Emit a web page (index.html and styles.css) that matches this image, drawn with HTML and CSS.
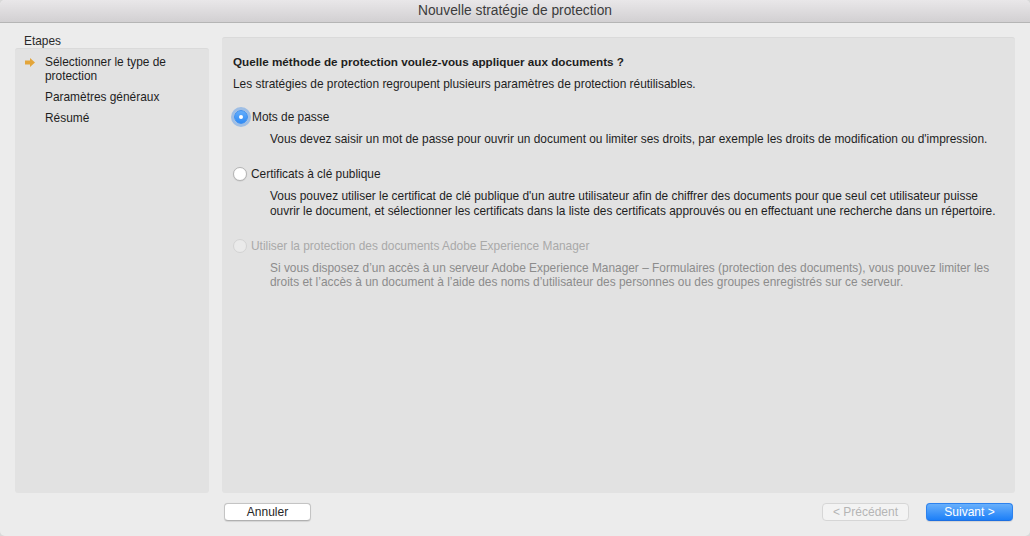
FILE: index.html
```html
<!DOCTYPE html>
<html lang="fr">
<head>
<meta charset="utf-8">
<title>Nouvelle stratégie de protection</title>
<link rel="stylesheet" href="styles.css">
</head>
<body>
<div class="window">
  <div class="titlebar">Nouvelle stratégie de protection</div>
  <div class="main">
    <div class="steps-col">
      <div class="steps-label">Etapes</div>
      <div class="steps-panel">
        <div class="step current">
          <span class="step-icon">
            <svg width="10" height="9" viewBox="0 0 10 9"><path d="M0 2.5h5V0l5 4.5L5 9V6.5H0z" fill="#e3a53a"/></svg>
          </span>
          <span class="step-text">Sélectionner le type de protection</span>
        </div>
        <div class="step"><span class="step-icon"></span><span class="step-text">Paramètres généraux</span></div>
        <div class="step"><span class="step-icon"></span><span class="step-text">Résumé</span></div>
      </div>
    </div>
    <div class="content">
      <div class="heading">Quelle méthode de protection voulez-vous appliquer aux documents ?</div>
      <div class="subtitle">Les stratégies de protection regroupent plusieurs paramètres de protection réutilisables.</div>

      <div class="option">
        <div class="radio-row">
          <span class="radio checked"></span>
          <span class="radio-label">Mots de passe</span>
        </div>
        <div class="desc">Vous devez saisir un mot de passe pour ouvrir un document ou limiter ses droits, par exemple les droits de modification ou d'impression.</div>
      </div>

      <div class="option">
        <div class="radio-row">
          <span class="radio"></span>
          <span class="radio-label">Certificats à clé publique</span>
        </div>
        <div class="desc">Vous pouvez utiliser le certificat de clé publique d'un autre utilisateur afin de chiffrer des documents pour que seul cet utilisateur puisse<br>ouvrir le document, et sélectionner les certificats dans la liste des certificats approuvés ou en effectuant une recherche dans un répertoire.</div>
      </div>

      <div class="option disabled">
        <div class="radio-row">
          <span class="radio"></span>
          <span class="radio-label">Utiliser la protection des documents Adobe Experience Manager</span>
        </div>
        <div class="desc tight">Si vous disposez d’un accès à un serveur Adobe Experience Manager – Formulaires (protection des documents), vous pouvez limiter les<br>droits et l’accès à un document à l’aide des noms d’utilisateur des personnes ou des groupes enregistrés sur ce serveur.</div>
      </div>
    </div>
  </div>
  <div class="footer">
    <button class="btn">Annuler</button>
    <div class="footer-right">
      <button class="btn btn-disabled">&lt; Précédent</button>
      <button class="btn btn-primary">Suivant &gt;</button>
    </div>
  </div>
</div>
</body>
</html>
```
FILE: styles.css
```css
* { box-sizing: border-box; }
html, body {
  margin: 0;
  padding: 0;
  background: #d9d9d9;
}
body {
  font-family: "Liberation Sans", Arial, sans-serif;
  font-size: 11.9px;
  color: #1e1e1e;
}
.window {
  width: 1030px;
  height: 536px;
  background: #ececec;
  border-radius: 5px;
  overflow: hidden;
  display: flex;
  flex-direction: column;
}
.titlebar {
  height: 23px;
  flex: none;
  background: linear-gradient(#e9e7e9, #d2d0d2);
  border-bottom: 1px solid #b5b5b5;
  text-align: center;
  font-size: 13.8px;
  line-height: 22px;
  color: #3c3c3c;
}
.main {
  height: 470px;
  flex: none;
  display: flex;
  padding: 14px 15px 0 15px;
  gap: 13px;
}
.steps-col {
  width: 194px;
  display: flex;
  flex-direction: column;
}
.steps-label {
  height: 11px;
  line-height: 9px;
  padding-left: 9px;
  color: #2a2a2a;
}
.steps-panel {
  flex: 1;
  background: #e2e2e2;
  border-radius: 3px;
  border-top: 1px solid #dadada;
  padding: 6px 0 0 10px;
}
.step {
  display: flex;
  line-height: 14px;
  margin-bottom: 7px;
}
.step-icon {
  width: 20px;
  flex: none;
  display: flex;
  align-items: center;
  height: 14px;
}
.step-text {
  width: 150px;
}
.content {
  width: 793px;
  background: #e2e2e2;
  border-radius: 3px;
  border-top: 1px solid #dadada;
  padding: 17px 11px 0 11px;
}
.heading {
  font-weight: bold;
  font-size: 11.7px;
  line-height: 14px;
  margin-bottom: 8px;
}
.subtitle {
  line-height: 14px;
  margin-bottom: 19px;
}
.option {
  margin-bottom: 20px;
}
.radio-row {
  display: flex;
  align-items: center;
  height: 14px;
  line-height: 14px;
}
.radio {
  width: 14px;
  height: 14px;
  border-radius: 50%;
  background: #fff;
  border: 1px solid #b4b4b4;
  box-shadow: 0 0.5px 1px rgba(0,0,0,0.12);
  margin-right: 4px;
  flex: none;
  position: relative;
}
.radio.checked {
  background: linear-gradient(#63adfb, #2f8bf5);
  border: 1px solid #3d8ff0;
  box-shadow: 0 0 0 3px rgba(102, 160, 232, 0.55);
  margin-left: 1px;
}
.radio.checked::after {
  content: "";
  position: absolute;
  left: 4px;
  top: 4px;
  width: 4px;
  height: 4px;
  border-radius: 50%;
  background: #fff;
}
.desc {
  margin-top: 8px;
  padding-left: 37px;
  line-height: 15px;
}
.desc.tight {
  line-height: 14px;
}
.disabled .radio {
  background: #eaeaea;
  border-color: #d3d3d3;
  box-shadow: none;
}
.disabled .radio-label {
  color: #a9a9a9;
}
.disabled .desc {
  color: #8c8c8c;
}
.footer {
  flex: none;
  display: flex;
  justify-content: space-between;
  padding: 10px 17px 0 224px;
}
.footer-right {
  display: flex;
  gap: 17px;
}
.btn {
  width: 87px;
  height: 18px;
  padding: 0;
  border-radius: 4px;
  font-family: "Liberation Sans", Arial, sans-serif;
  font-size: 12px;
  line-height: 16px;
  color: #262626;
  background: #fff;
  border: 1px solid #c4c4c4;
  border-bottom-color: #b0b0b0;
  box-shadow: 0 0.5px 1px rgba(0,0,0,0.1);
}
.btn-disabled {
  background: #f3f3f3;
  border-color: #d6d6d6;
  color: #b5b5b5;
  box-shadow: none;
}
.btn-primary {
  background: linear-gradient(#69b0fb, #1c7ff8);
  border-color: #2d82ee;
  border-bottom-color: #1d6fe0;
  color: #fff;
}
```
